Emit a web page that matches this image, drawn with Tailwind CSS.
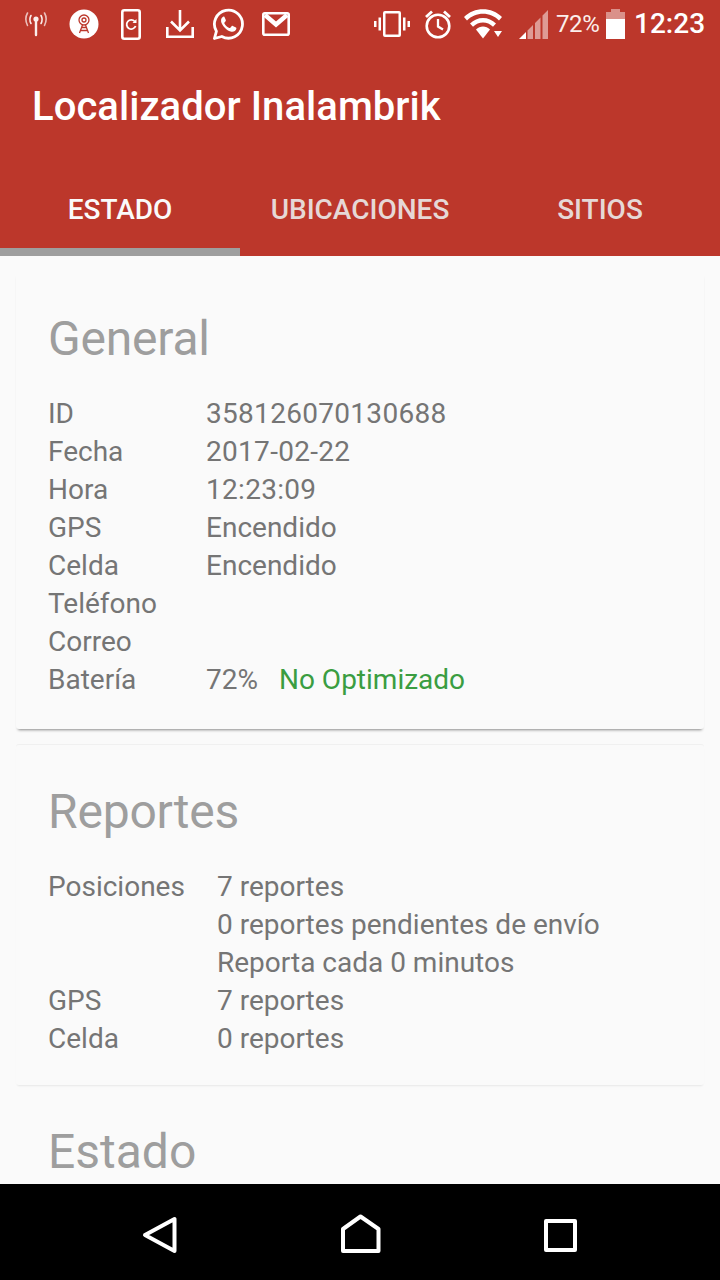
<!DOCTYPE html>
<html lang="es">
<head>
    <meta charset="UTF-8">
    <title>Localizador Inalambrik</title>
    <script src="https://cdn.jsdelivr.net/npm/@tailwindcss/browser@4"></script>
</head>
<body class="font-[Roboto,sans-serif]">
<div class="w-[720px] h-[1280px] flex flex-col overflow-hidden bg-[#fafafa]">
    <!-- barra de estado -->
    <div class="h-[48px] shrink-0 bg-[#bc372b] flex items-center text-white">
        <svg class="ml-[24px]" width="24" height="26" viewBox="0 0 24 26" fill="none" stroke="#fbeeec" stroke-linecap="round">
            <circle cx="12" cy="8" r="2.600" fill="#fbeeec" stroke="none"/>
            <path d="M12 9v15" stroke-width="2.400"/>
            <path d="M7 4.500C5.600 7 5.600 10 7 12.500M17 4.500C18.400 7 18.400 10 17 12.500" stroke-width="1.600"/>
            <path d="M3.500 2C1.500 5.500 1.500 10.500 3.500 14.500M20.500 2C22.500 5.500 22.500 10.500 20.500 14.500" stroke-width="1.600" opacity=".75"/>
        </svg>
        <svg class="ml-[21px]" width="30" height="30" viewBox="0 0 30 30" fill="none">
            <circle cx="15" cy="15" r="14.500" fill="#fff"/>
            <g stroke="#bc372b" stroke-width="1.300">
                <circle cx="15" cy="11" r="2"/>
                <circle cx="15" cy="11" r="5"/>
                <path d="M13.500 16l-3 8M16.500 16l3 8M12.500 18.500h5M11.500 21.500h7"/>
            </g>
        </svg>
        <svg class="ml-[22px]" width="20" height="31" viewBox="0 0 20 31" fill="none" stroke="#fff">
            <rect x="1.300" y="1.300" width="17.400" height="28.400" rx="2" stroke-width="2.600"/>
            <path d="M13.800 12.500A4.600 4.600 0 1 0 14.600 17" stroke-width="1.800"/>
            <path d="M11.500 14h4v-4z" fill="#fff" stroke="none"/>
        </svg>
        <svg class="ml-[25px]" width="28" height="28" viewBox="0 0 28 28" fill="none" stroke="#fff" stroke-width="2.600">
            <path d="M14 0v19M5 11.500l9 9 9-9"/>
            <path d="M1.300 17v9.700h25.400V17"/>
        </svg>
        <svg class="ml-[18px]" width="32" height="33" viewBox="0 0 32 33" fill="none">
            <path d="M2.400 30.500l2-7.200A14 14 0 1 1 9.800 28.500z" stroke="#fff" stroke-width="2.800" stroke-linejoin="round"/>
            <path d="M11.500 8.500c-1.500.6-2.800 2.600-2.400 5 .6 3.800 5.800 9.600 10.400 10.300 2.400.3 4.300-1 4.800-2.700.2-.8.100-1.300-.3-1.600l-3.200-1.600c-.5-.2-.9-.1-1.200.3l-1.300 1.600c-.3.300-.6.400-1 .2-2-.9-3.800-2.500-4.900-4.500-.2-.4-.1-.7.100-1l1.100-1.300c.3-.4.300-.7.200-1.100l-1.400-3.300c-.3-.5-1.400-.5-1.900-.300z" fill="#fff"/>
        </svg>
        <svg class="ml-[18px]" width="28" height="24" viewBox="0 0 28 24" fill="none" stroke="#fff">
            <rect x="1.300" y="1.300" width="25.400" height="21.400" rx="1.500" stroke-width="2.600"/>
            <path d="M3 3l11 9.500L25 3" stroke-width="4.400"/>
        </svg>
        <svg class="ml-[84px]" width="36" height="26" viewBox="0 0 36 26" fill="#fff">
            <path fill-rule="evenodd" d="M11 0h14a2 2 0 0 1 2 2v22a2 2 0 0 1-2 2H11a2 2 0 0 1-2-2V2a2 2 0 0 1 2-2zm.500 2.500v21h13v-21z"/>
            <rect x="4.500" y="6.500" width="2.500" height="13"/>
            <rect x="0" y="10" width="2.500" height="6"/>
            <rect x="29" y="6.500" width="2.500" height="13"/>
            <rect x="33.500" y="10" width="2.500" height="6"/>
        </svg>
        <svg class="ml-[14px]" width="28" height="29" viewBox="0 0 28 29" fill="none" stroke="#fff">
            <circle cx="14" cy="16" r="11.300" stroke-width="2.600"/>
            <path d="M14 9v7.500l5 3" stroke-width="2.300"/>
            <path d="M2 7l6-5.500M26 7l-6-5.500" stroke-width="2.800"/>
        </svg>
        <svg class="ml-[12px]" width="40" height="32" viewBox="0 0 40 32" fill="#fff">
            <path d="M0 9C10-1.500 28-1.500 38 9l-3 3.500C26.500 3.500 11.500 3.500 3 12.500z"/>
            <path d="M6 15.500C13 8 25 8 32 15.500l-3 3.300C23.500 13 14.500 13 9 18.800z"/>
            <path d="M12 21.500c4-4 10-4 14 0l-7 9z"/>
            <path d="M30 23h8l-4 6z"/>
        </svg>
        <svg class="ml-[15px]" width="30" height="30" viewBox="0 0 30 30" fill="#fff">
            <path d="M0 30L7 23v7z"/>
            <path opacity=".5" d="M8.500 21.500L14 16v14H8.500zM16 14l5.500-5.500V30H16zM23.500 6.500L29 1v29h-5.500z"/>
        </svg>
        <span class="ml-[7px] w-[43px] text-[24px] leading-none font-normal text-[#fbeeec] tracking-[-0.4px] whitespace-nowrap">72%</span>
        <svg class="ml-[7px]" width="19" height="30" viewBox="0 0 19 30" fill="#fff">
            <path opacity=".45" d="M0 3h5V0h9v3h5v7H0z"/>
            <path d="M0 10h19v20H0z"/>
        </svg>
        <span class="ml-[9px] text-[28px] leading-none font-medium whitespace-nowrap">12:23</span>
    </div>

    <!-- barra de la aplicacion -->
    <div class="h-[112px] shrink-0 bg-[#bc372b] flex items-center pl-[32px] pt-[6px]">
        <h1 class="text-[40px] tracking-[0.05px] font-medium text-white leading-none">Localizador Inalambrik</h1>
    </div>

    <!-- pestanas -->
    <div class="h-[96px] shrink-0 bg-[#bc372b] grid grid-cols-3 text-[28px] font-medium">
        <div class="flex items-center justify-center pt-[12px] border-b-[8px] border-[#9e9e9e] text-[#fafafa]">ESTADO</div>
        <div class="flex items-center justify-center pt-[4px] text-[#e6d8d6]">UBICACIONES</div>
        <div class="flex items-center justify-center pt-[4px] text-[#e6d8d6]">SITIOS</div>
    </div>

    <!-- contenido -->
    <div class="flex-1 min-h-0 overflow-hidden px-[16px] pt-[16px] text-[28px] leading-[38px] text-[#757575]">
        <section class="h-[457px] rounded-[3px] shadow-[0_3px_3px_-2px_rgba(0,0,0,0.45)] pl-[32px] pt-[37px]">
            <h2 class="text-[48px] tracking-[-0.2px] leading-[60px] text-[#9e9e9e] mb-[26px]">General</h2>
            <div class="grid grid-cols-[158px_1fr]">
                <div>ID</div><div class="tracking-[0.3px]">358126070130688</div>
                <div>Fecha</div><div class="tracking-[0.3px]">2017-02-22</div>
                <div>Hora</div><div class="tracking-[0.3px]">12:23:09</div>
                <div>GPS</div><div>Encendido</div>
                <div>Celda</div><div>Encendido</div>
                <div>Teléfono</div><div></div>
                <div>Correo</div><div></div>
                <div>Batería</div><div class="flex gap-[21px]"><span>72%</span><span class="text-[#3a9d41]">No Optimizado</span></div>
            </div>
        </section>
        <section class="h-[341px] mt-[15px] rounded-[3px] border-t border-[#f0f0f0] shadow-[0_2px_2px_-1px_rgba(0,0,0,0.08)] pl-[32px] pt-[37px]">
            <h2 class="text-[48px] tracking-[-0.2px] leading-[60px] text-[#9e9e9e] mb-[26px]">Reportes</h2>
            <div class="grid grid-cols-[169px_1fr]">
                <div>Posiciones</div><div>7 reportes</div>
                <div></div><div>0 reportes pendientes de envío</div>
                <div></div><div>Reporta cada 0 minutos</div>
                <div>GPS</div><div>7 reportes</div>
                <div>Celda</div><div>0 reportes</div>
            </div>
        </section>
        <section class="pl-[32px] pt-[37px]">
            <h2 class="text-[48px] leading-[60px] text-[#9e9e9e]">Estado</h2>
        </section>
    </div>

    <!-- navegacion -->
    <div class="h-[96px] shrink-0 bg-black relative">
        <svg class="absolute left-[142px] top-[32px]" width="36" height="38" viewBox="0 0 36 38" fill="none" stroke="#fff" stroke-width="4" stroke-linejoin="round">
            <path d="M32.500 3v32L3 19z"/>
        </svg>
        <svg class="absolute left-[340px] top-[30px]" width="42" height="40" viewBox="0 0 42 40" fill="none" stroke="#fff" stroke-width="4" stroke-linejoin="round">
            <path d="M3 15L20.500 2.500 38.500 15v22H3z"/>
        </svg>
        <svg class="absolute left-[544px] top-[35px]" width="34" height="33" viewBox="0 0 34 33" fill="none" stroke="#fff" stroke-width="4" stroke-linejoin="round">
            <rect x="2" y="2" width="29" height="29"/>
        </svg>
    </div>
</div>
</body>
</html>
